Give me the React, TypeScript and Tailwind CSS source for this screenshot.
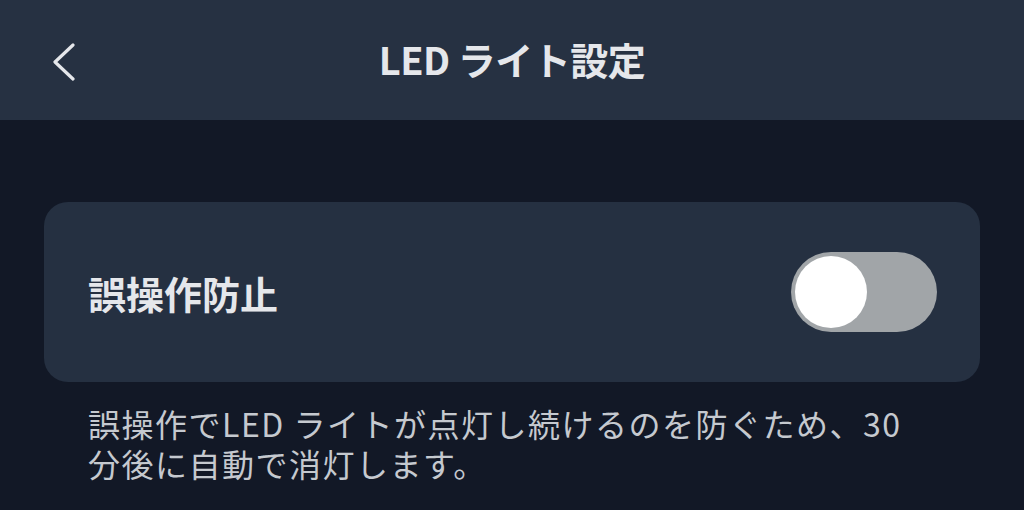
export default function App() {
  return (
    <div
      className="h-[510px] w-[1024px] overflow-hidden bg-[#121826]"
      style={{ fontFamily: '"Noto Sans CJK JP", "Noto Sans", sans-serif' }}
    >
      {/* header */}
      <div className="relative flex h-[120px] items-center justify-center bg-[#263142]">
        <button className="absolute left-[44px] top-[36px] flex h-[50px] w-[40px] items-center justify-center">
          <svg width="30" height="40" viewBox="0 0 30 40" fill="none">
            <path
              d="M24 4 L6 21 L24 38"
              stroke="#e5e7eb"
              strokeWidth="3.2"
              strokeLinecap="round"
              strokeLinejoin="round"
            />
          </svg>
        </button>
        <h1 className="mb-[3px] text-[38px] font-bold tracking-[-0.5px] text-[#e5e7eb]">LED ライト設定</h1>
      </div>

      {/* setting card */}
      <div className="px-[44px] pt-[82px]">
        <div className="flex h-[180px] items-center justify-between rounded-[24px] bg-[#253041] pl-[44px] pr-[43px]">
          <span className="text-[38px] font-bold text-[#e5e7eb]">誤操作防止</span>
          <div className="flex h-[80px] w-[146px] items-center rounded-full bg-[#a1a5a8] pl-[4px]">
            <div className="h-[72px] w-[72px] rounded-full bg-white" />
          </div>
        </div>
        <p className="pl-[44px] pr-[70px] pt-[21px] text-[32px] leading-[40px] tracking-[1.5px] text-[#c5c9cf]">
          誤操作でLED ライトが点灯し続けるのを防ぐため、30<wbr />分後に自動で消灯します。
        </p>
      </div>
    </div>
  );
}
